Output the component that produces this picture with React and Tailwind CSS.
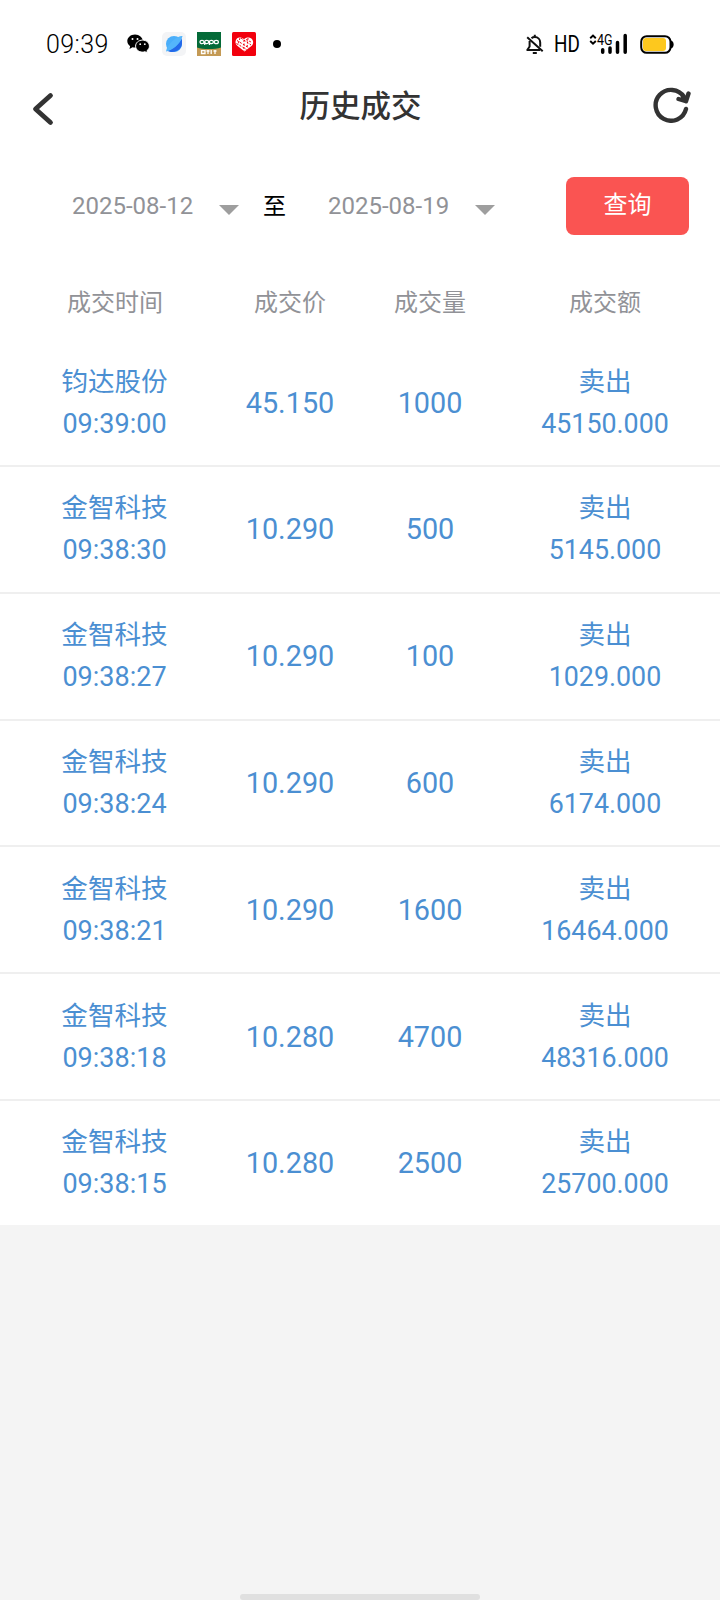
const trades = [
  { name: '钧达股份', time: '09:39:00', price: '45.150', volume: '1000', side: '卖出', amount: '45150.000' },
  { name: '金智科技', time: '09:38:30', price: '10.290', volume: '500', side: '卖出', amount: '5145.000' },
  { name: '金智科技', time: '09:38:27', price: '10.290', volume: '100', side: '卖出', amount: '1029.000' },
  { name: '金智科技', time: '09:38:24', price: '10.290', volume: '600', side: '卖出', amount: '6174.000' },
  { name: '金智科技', time: '09:38:21', price: '10.290', volume: '1600', side: '卖出', amount: '16464.000' },
  { name: '金智科技', time: '09:38:18', price: '10.280', volume: '4700', side: '卖出', amount: '48316.000' },
  { name: '金智科技', time: '09:38:15', price: '10.280', volume: '2500', side: '卖出', amount: '25700.000' },
];

function WechatIcon() {
  return (
    <svg width="23" height="20" viewBox="0 0 23 20">
      <path fill="#000" d="M8 .5C3.700.5.3 3.400.3 7.100c0 2.100 1.100 3.900 2.800 5.100L2.500 15l3-1.700c.8.200 1.600.3 2.500.3 4.300 0 7.800-2.900 7.800-6.500S12.300.5 8 .5z" />
      <path fill="#000" stroke="#fff" strokeWidth="1" d="M15.500 6.100c-3.900 0-6.900 2.700-6.900 6s3 6 6.900 6c.9 0 1.700-.1 2.500-.4l2.600 1.500-.7-2.400c1.500-1.100 2.500-2.800 2.500-4.700 0-3.300-3-6-6.900-6z" />
      <circle cx="5.500" cy="5" r="1" fill="#fff" />
      <circle cx="10.500" cy="5" r="1" fill="#fff" />
      <circle cx="13.200" cy="10.200" r=".9" fill="#fff" />
      <circle cx="17.800" cy="10.200" r=".9" fill="#fff" />
    </svg>
  );
}

function BrowserIcon() {
  return (
    <svg width="24" height="24" viewBox="0 0 24 24">
      <rect width="24" height="24" rx="5" fill="#f3f4f6" />
      <circle cx="12" cy="12" r="8" fill="#4aaefa" />
      <path fill="#2368e9" d="M20 5.500C18 12 11 18 5 18.500c6.500 4 15-.5 15-7z" />
      <path fill="#54b5fb" d="M20.500 4C17 3 5 11 4 19.500 9 19 19 11.500 20.500 4z" />
    </svg>
  );
}

function OppoIcon() {
  return (
    <svg width="24" height="24" viewBox="0 0 24 24">
      <rect width="24" height="24" fill="#046a38" />
      <path fill="#c49a55" d="M0 15.500c6 2 18 2 24 0V24H0z" />
      <g fill="none" stroke="#fff" strokeWidth="1.200">
        <ellipse cx="5" cy="10" rx="2" ry="1.700" />
        <ellipse cx="9.700" cy="10" rx="2" ry="1.700" />
        <ellipse cx="14.400" cy="10" rx="2" ry="1.700" />
        <ellipse cx="19.300" cy="10" rx="2.100" ry="1.700" />
        <path d="M7.700 10v3M12.400 10v3" />
      </g>
      <path fill="none" stroke="#fff" strokeWidth="1.300" d="M4.500 18.700h3.500v2.800h-3.500zM9.500 19h3M11 18v4M14.200 18v4M16.500 19h3M18 18v4" />
    </svg>
  );
}

function HeartIcon() {
  return (
    <svg width="24" height="24" viewBox="0 0 24 24">
      <rect width="24" height="24" rx="1.500" fill="#f2000d" />
      <path fill="#fff" d="M12.500 19.500 5 13.500C2 10.500 4 5.500 7.500 5.500c2 0 3.500.5 4.500 2 1-1.500 2.500-2 4.500-2C20 5.500 23 10 20 13.500z" />
      <path fill="none" stroke="#f2000d" strokeWidth="1" strokeDasharray="2 1.500" d="M5 8.500l12 7.500M4.500 11.500l10 6M9 6l10 7M14 7.500l6 3M12 8v11M8 6l-2 7M16 6l-1 10" />
    </svg>
  );
}

function MuteIcon() {
  return (
    <svg width="18" height="21" viewBox="0 0 18 21" fill="none" stroke="#111" strokeWidth="2">
      <path d="M5.500 4.200C6.500 3.300 7.500 3 8.800 3c3.200 0 5.400 2.400 5.400 5.500v4.300" />
      <path d="M3.600 7v5.500L1.300 16H14" strokeLinejoin="round" />
      <path d="M8.800.8v2M1.200 3.200l15.500 14" />
      <path d="M6.800 19h4" />
    </svg>
  );
}

function SignalIcon() {
  return (
    <svg width="39" height="22" viewBox="0 0 39 22">
      <path fill="none" stroke="#000" strokeWidth="1.900" d="M1.200 5.200L4 2.500l2.800 2.700M1.200 8L4 10.700 6.800 8" />
      <text x="8" y="12.200" fontSize="14" fontFamily="Roboto, sans-serif" textLength="15.500" lengthAdjust="spacingAndGlyphs">4G</text>
      <path fill="none" stroke="#000" strokeWidth="3.500" strokeLinecap="round" d="M13.700 16.700v2.600M21 15v4.300M28.500 9.500v9.800M36.200 2.500v16.800" />
    </svg>
  );
}

function BatteryIcon() {
  return (
    <svg width="34" height="19" viewBox="0 0 34 19">
      <rect x="1.200" y="1.200" width="29.300" height="16.600" rx="5.500" fill="#fff" stroke="#000" strokeWidth="2" />
      <rect x="3" y="3" width="23" height="13" rx="3" fill="#fdc81e" />
      <path d="M31 5.500c3.500.5 3.500 7.500 0 8z" fill="#000" />
    </svg>
  );
}

function StatusBar() {
  return (
    <div className="flex h-[88px] items-center justify-between pl-[46px] pr-[46px] text-black">
      <div className="flex items-center">
        <span className="w-[81px] text-[25px] font-light leading-none tracking-[0.4px]">09:39</span>
        <WechatIcon />
        <div className="ml-[12px] flex items-center gap-[11px]">
          <BrowserIcon />
          <OppoIcon />
          <HeartIcon />
        </div>
        <span className="ml-[17px] h-2 w-2 rounded-full bg-black" />
      </div>
      <div className="flex items-center">
        <MuteIcon />
        <span className="ml-[10px] w-[27px] text-[23px] leading-none"><span className="inline-block origin-left scale-x-[0.82]">HD</span></span>
        <div className="ml-[8px] mr-[12px]"><SignalIcon /></div>
        <BatteryIcon />
      </div>
    </div>
  );
}

function DateField({ value }) {
  return (
    <div className="flex items-center">
      <span className="w-[147px] text-[24px] leading-none text-[#919297]">{value}</span>
      <svg className="mt-[7px]" width="20" height="10" viewBox="0 0 20 10">
        <path d="M0 0h20L10 10z" fill="#9e9e9e" />
      </svg>
    </div>
  );
}

function TradeRow({ trade }) {
  return (
    <div className="grid h-[126.800px] grid-cols-[3fr_2fr_2fr_3fr] items-center border-b-2 border-[#efefef] bg-white px-[10px] text-center text-[26.600px] leading-[42px] text-[#4b8fd2]">
      <div>
        <p className="-ml-px">{trade.name}</p>
        <p className="-ml-px text-[27px]">{trade.time}</p>
      </div>
      <p className="text-[28.800px]">{trade.price}</p>
      <p className="text-[28.800px]">{trade.volume}</p>
      <div>
        <p>{trade.side}</p>
        <p className="text-[26.800px]">{trade.amount}</p>
      </div>
    </div>
  );
}

export default function App() {
  return (
    <div className="flex h-[1600px] w-[720px] flex-col overflow-hidden bg-[#f4f4f4] font-[Roboto,'Noto_Sans_CJK_SC',sans-serif]">
      <header className="bg-white">
        <StatusBar />

        {/* Title bar */}
        <div className="grid h-[40px] grid-cols-[1fr_auto_1fr] items-center pl-[32px] pr-[29px]">
          <svg className="mt-[2px]" width="22" height="34" viewBox="0 0 22 34" fill="none" stroke="#333" strokeWidth="4.800" strokeLinecap="round" strokeLinejoin="round">
            <path d="M18.500 3.500L3.500 17l15 13.500" />
          </svg>
          <h1 className="-mt-[2px] -ml-[2px] text-[30.500px] font-medium leading-none text-[#333]">历史成交</h1>
          <svg className="-mt-[6px] justify-self-end" width="38" height="36" viewBox="0 0 38 36" fill="none" stroke="#333" strokeWidth="4.400" strokeLinecap="round" strokeLinejoin="round">
            <path d="M33 22A15.400 15.400 0 1 1 31 10" />
            <path d="M35.500 6.500L33 14.200 25.500 12M30 9.500l3 4.700" />
          </svg>
        </div>

        {/* Date range */}
        <div className="flex h-[156px] items-center pl-[72px]">
          <DateField value="2025-08-12" />
          <span className="ml-[24px] mr-[42px] text-[23px] leading-none">至</span>
          <DateField value="2025-08-19" />
          <button className="ml-[71px] h-[58px] w-[123px] rounded-[8px] bg-[#fa5452] pb-[3px] text-[24px] text-white">查询</button>
        </div>

        <div className="grid h-[56.200px] grid-cols-[3fr_2fr_2fr_3fr] px-[10px] pt-[3px] text-center text-[24px] leading-[32px] text-[#919297]">
          <p>成交时间</p>
          <p>成交价</p>
          <p>成交量</p>
          <p>成交额</p>
        </div>
      </header>

      <main className="h-[885px] shrink-0 overflow-hidden">
        {trades.map((trade) => <TradeRow key={trade.time} trade={trade} />)}
      </main>

      <div className="mx-auto mt-auto h-[6px] w-[240px] rounded-full bg-[#e0e0e0]" />
    </div>
  );
}
